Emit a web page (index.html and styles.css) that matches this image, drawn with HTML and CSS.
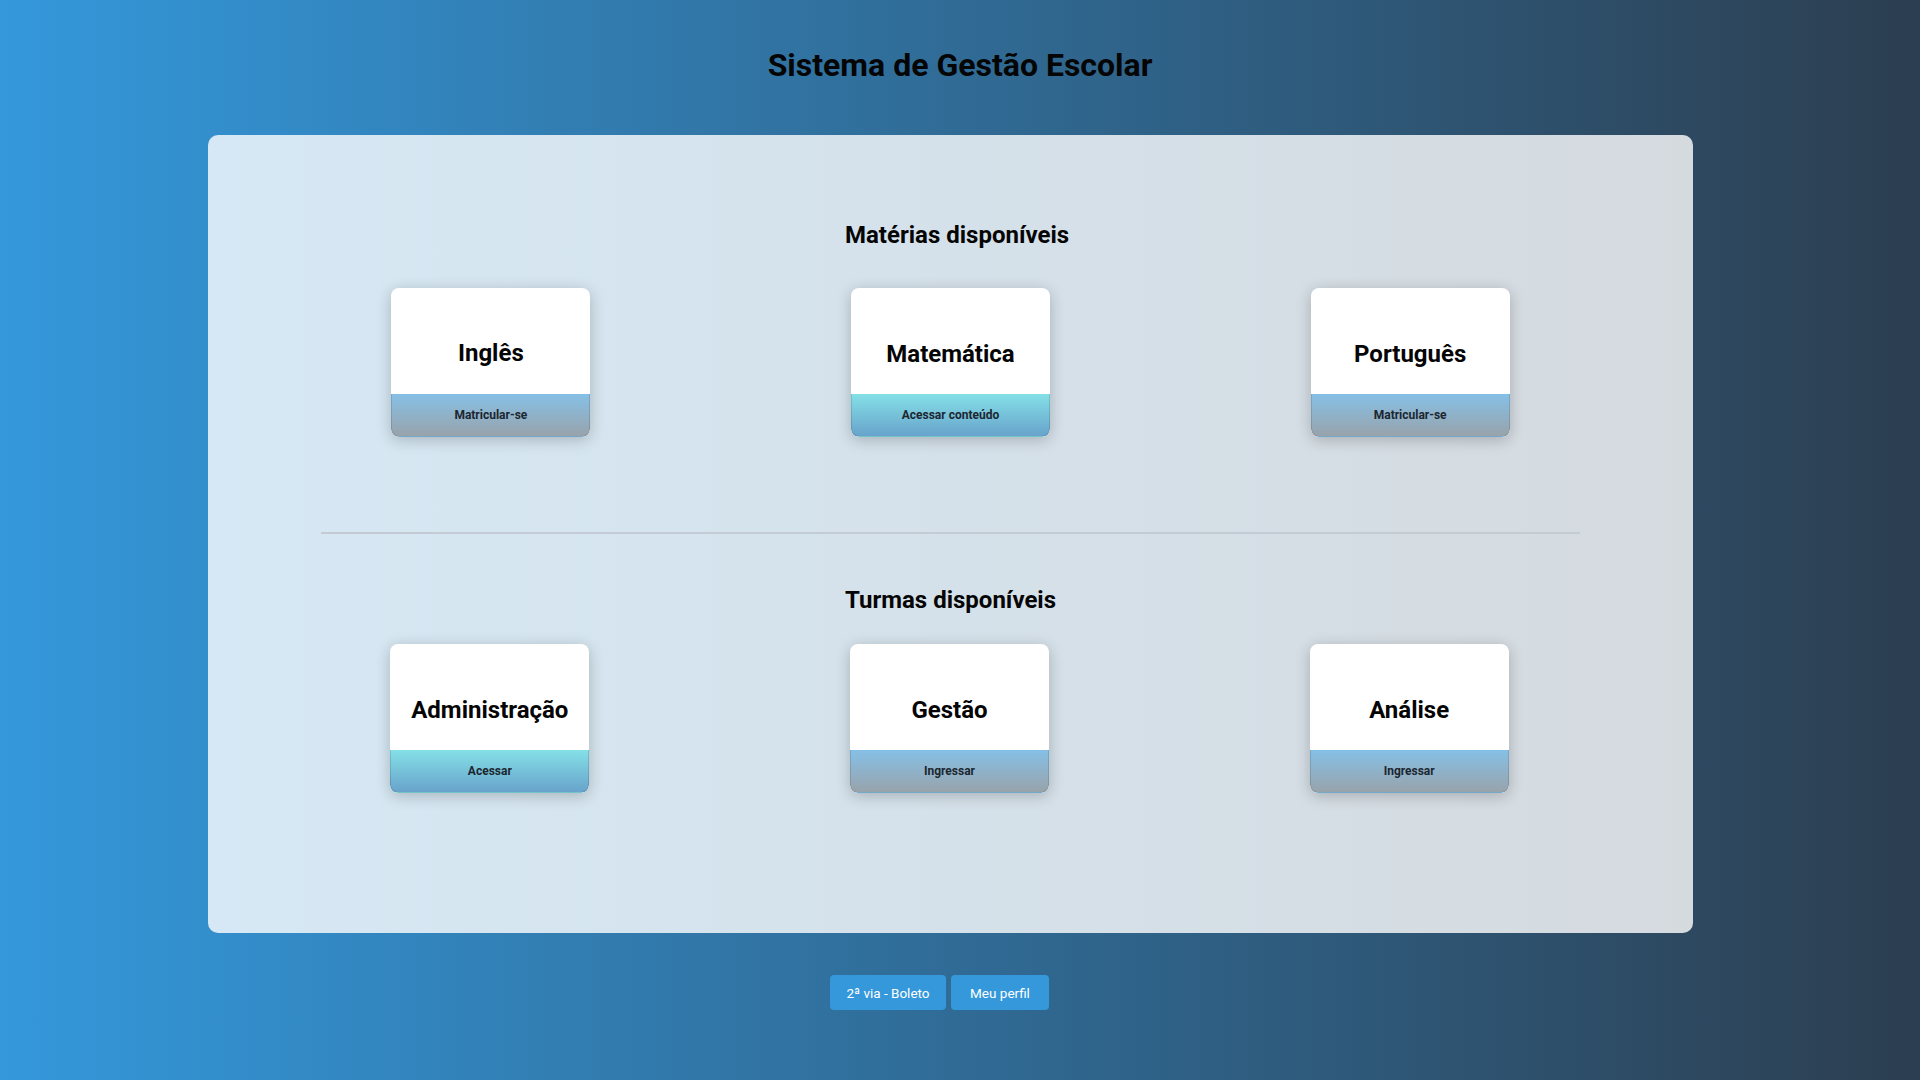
FILE: index.html
```html
<!DOCTYPE html>
<html lang="pt-BR">
<head>
<meta charset="utf-8">
<title>Sistema de Gestão Escolar</title>
<link rel="stylesheet" href="styles.css">
</head>
<body>
  <header class="page-header">
    <h1 class="page-title">Sistema de Gestão Escolar</h1>
  </header>

  <main class="panel">
    <h2 class="section-title">Matérias disponíveis</h2>
    <div class="card-row card-row--first">
      <div class="card">
        <div class="card-title">Inglês</div>
        <div class="card-action card-action--gray">Matricular-se</div>
      </div>
      <div class="card">
        <div class="card-title card-title--low">Matemática</div>
        <div class="card-action card-action--cyan">Acessar conteúdo</div>
      </div>
      <div class="card">
        <div class="card-title card-title--low">Português</div>
        <div class="card-action card-action--gray">Matricular-se</div>
      </div>
    </div>

    <hr class="divider">

    <h2 class="section-title section-title--second">Turmas disponíveis</h2>
    <div class="card-row card-row--second">
      <div class="card">
        <div class="card-title card-title--row2">Administração</div>
        <div class="card-action card-action--cyan">Acessar</div>
      </div>
      <div class="card">
        <div class="card-title card-title--row2">Gestão</div>
        <div class="card-action card-action--gray">Ingressar</div>
      </div>
      <div class="card">
        <div class="card-title card-title--row2">Análise</div>
        <div class="card-action card-action--gray">Ingressar</div>
      </div>
    </div>
  </main>

  <nav class="footer-actions">
    <button class="btn btn--boleto">2ª via - Boleto</button>
    <button class="btn btn--perfil">Meu perfil</button>
  </nav>
</body>
</html>
```

FILE: styles.css
```css
html {
  background: linear-gradient(to right, #3498db, #2c3e50);
  min-height: 100%;
}

body {
  margin: 0;
  min-height: 1080px;
  font-family: Roboto, "Liberation Sans", Arial, sans-serif;
  color: #0d0d0d;
}

.page-header {
  padding-top: 47px;
}

.page-title {
  margin: 0;
  font-size: 32px;
  font-weight: 700;
  line-height: 37px;
  text-align: center;
  color: #050505;
}

.panel {
  margin: 51px 0 0 208px;
  width: 1485px;
  box-sizing: border-box;
  padding: 86px 53px 140px 53px;
  background: rgba(255, 255, 255, 0.8);
  border-radius: 10px;
}

.section-title {
  margin: 0 0 0 584px;
  font-size: 24px;
  font-weight: 700;
  line-height: 28px;
  color: #050505;
}

.section-title--second {
  margin-top: 52px;
}

.card-row {
  display: grid;
  grid-template-columns: repeat(3, 1fr);
  justify-items: center;
}

.card-row--first {
  margin-top: 39px;
}

.card-row--second {
  margin-top: 30px;
  margin-left: -1px;
  margin-right: 1px;
}

.card {
  width: 199px;
  height: 149px;
  display: flex;
  flex-direction: column;
  background: #fff;
  border-radius: 8px;
  box-shadow: 0 3px 15px rgba(0, 0, 0, 0.22);
  overflow: hidden;
}

.card-title {
  height: 106px;
  box-sizing: border-box;
  padding-top: 51px;
  font-size: 24px;
  font-weight: 700;
  line-height: 28px;
  text-align: center;
  color: #050505;
}

.card-title--low {
  padding-top: 52px;
}

.card-title--row2 {
  padding-top: 52px;
}

.card-action {
  flex: 1;
  display: flex;
  align-items: center;
  justify-content: center;
  font-size: 12px;
  font-weight: 700;
  color: #1c2630;
  border: 1px solid rgba(0, 0, 0, 0.12);
  border-top: none;
  border-radius: 0 0 8px 8px;
}

.card-action--gray {
  background: linear-gradient(to bottom, #86c0e6, #98a3ab);
}

.card-action--cyan {
  background: linear-gradient(to bottom, #84e0e7, #68a3cb);
}

.divider {
  margin: 95px 60px 0 60px;
  height: 2px;
  border: none;
  background: #c3ccd4;
}

.footer-actions {
  display: flex;
  justify-content: center;
  gap: 5px;
  margin-top: 42px;
  padding-right: 41px;
}

.btn {
  height: 35px;
  border: none;
  border-radius: 4px;
  background: #3498db;
  color: #fff;
  font-family: Roboto, "Liberation Sans", Arial, sans-serif;
  font-size: 13.5px;
  padding: 0;
  cursor: pointer;
}

.btn--boleto {
  width: 116px;
}

.btn--perfil {
  width: 98px;
}
```
